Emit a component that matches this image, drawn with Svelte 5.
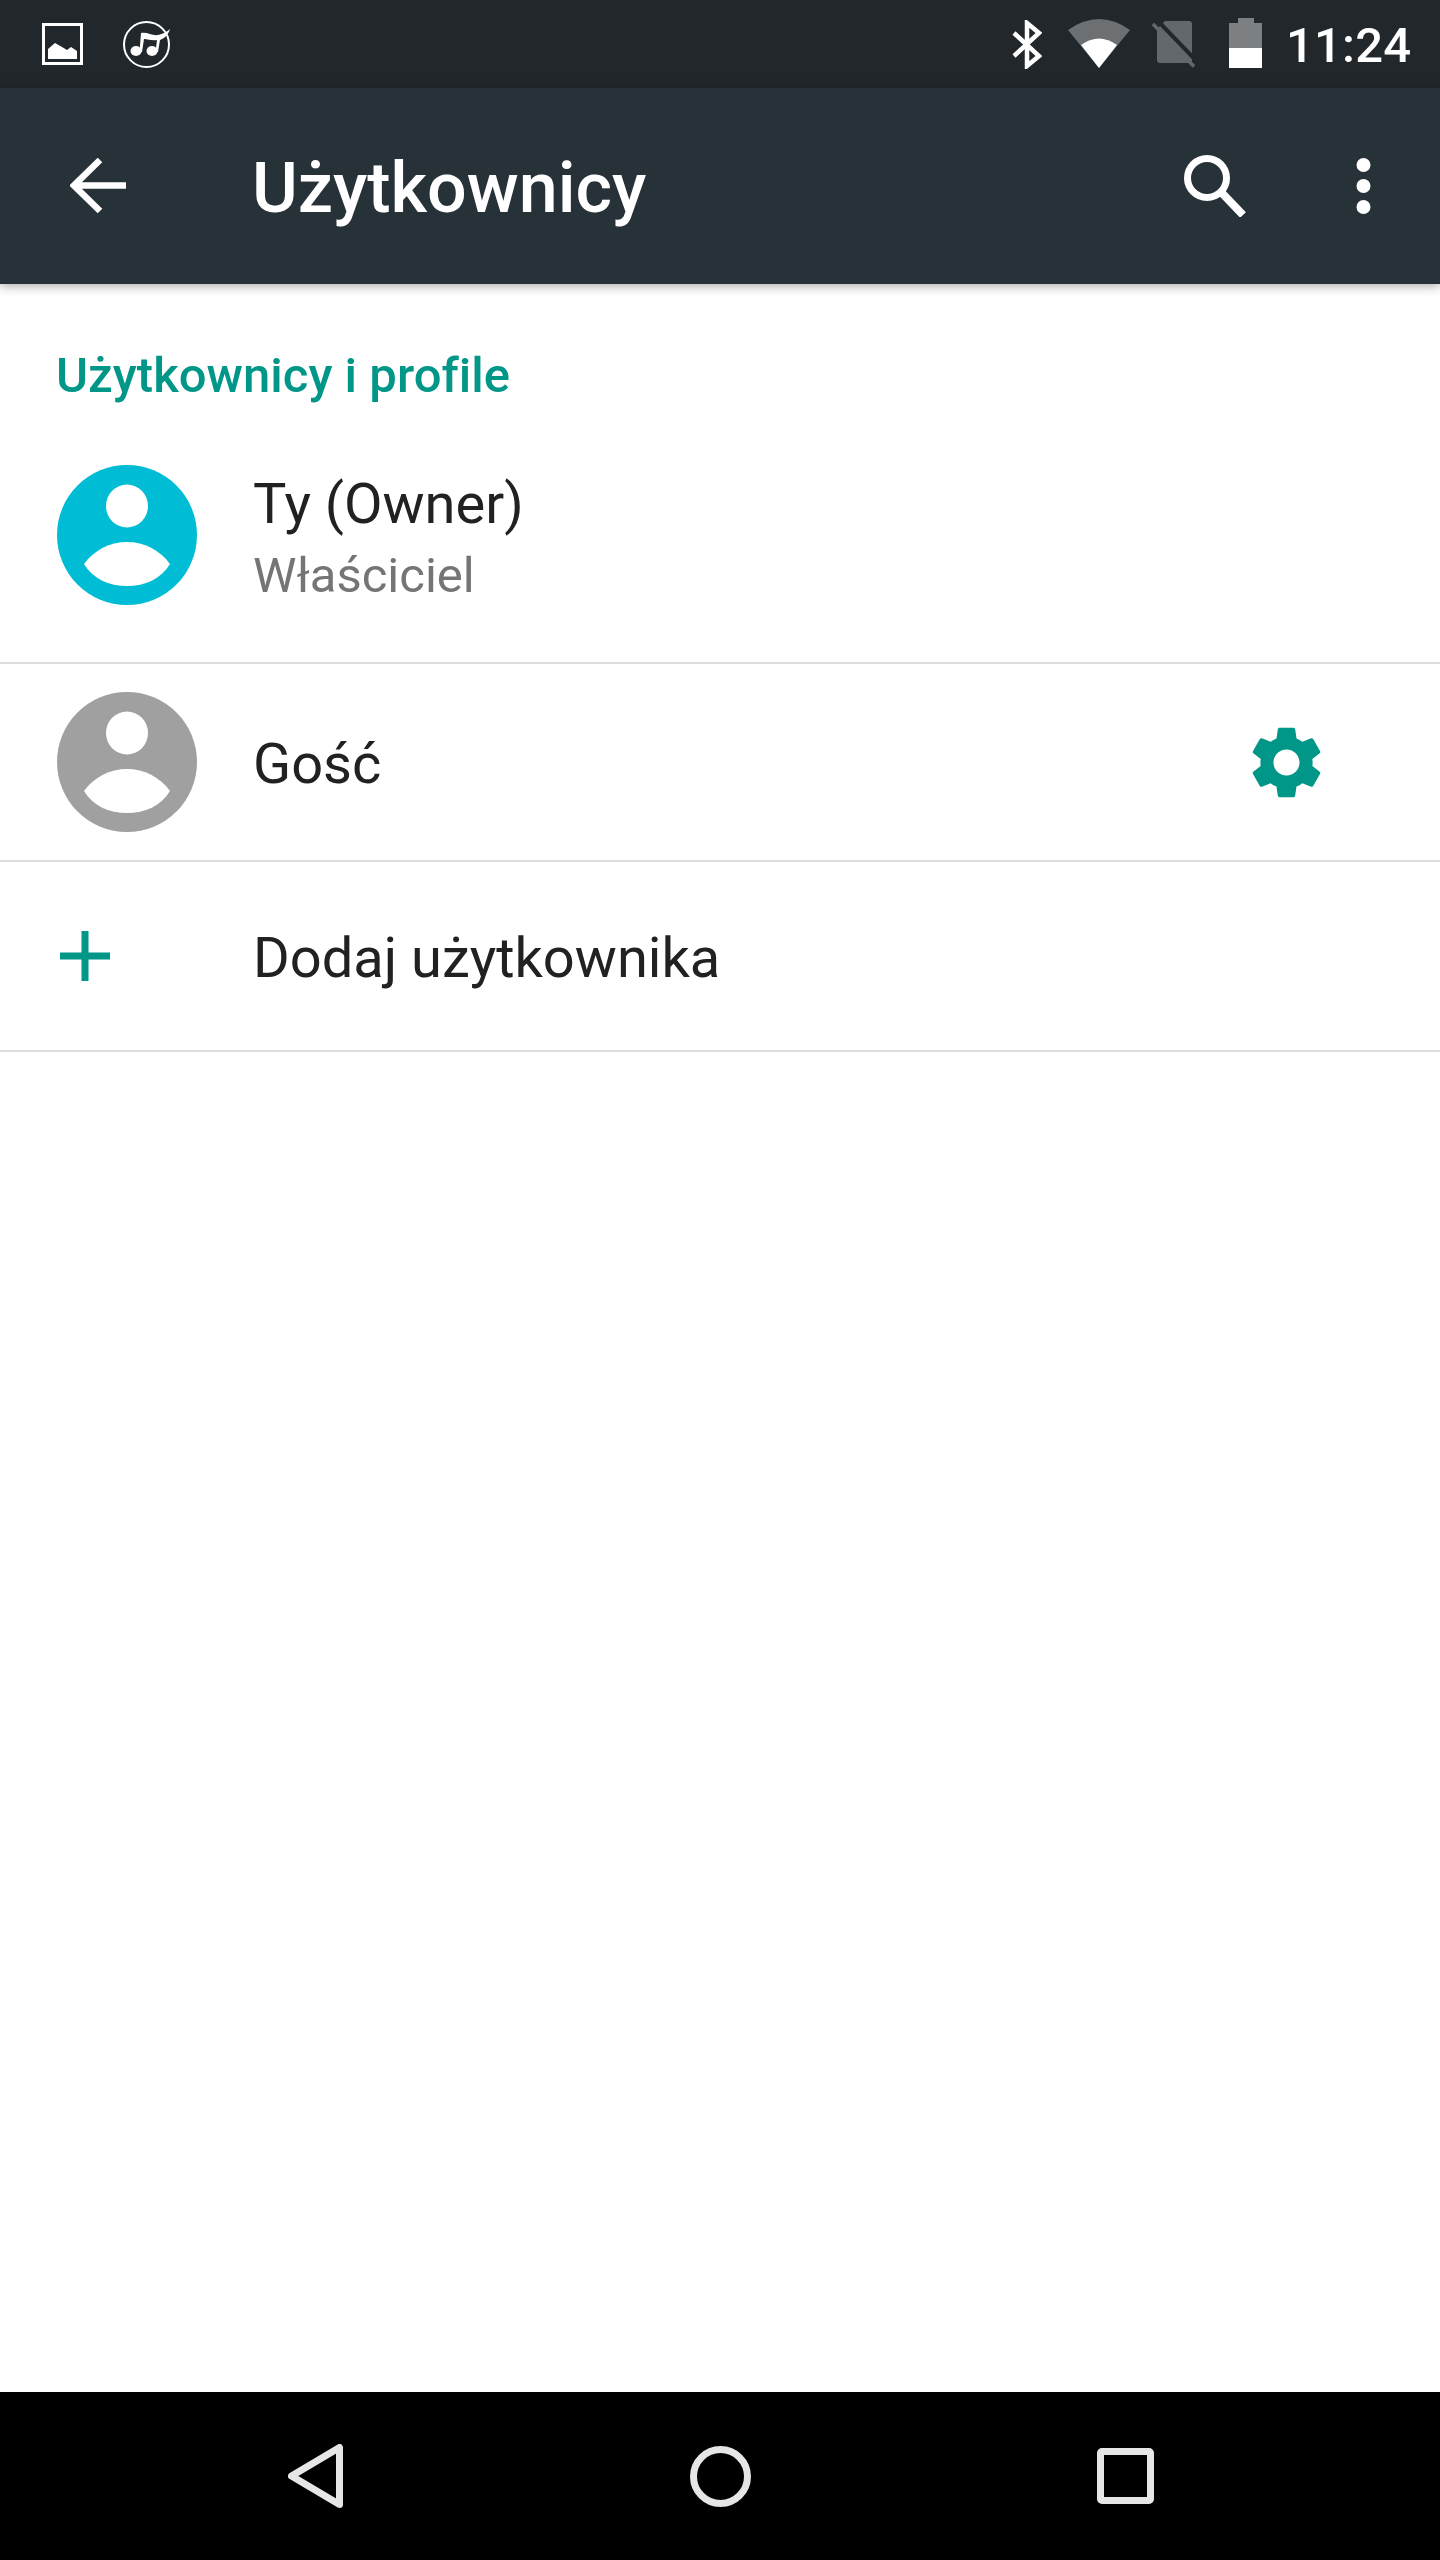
<script>
  const gear = "M19.14 12.94c.04-.3.06-.61.06-.94 0-.32-.02-.64-.07-.94l2.03-1.58c.18-.14.23-.41.12-.61l-1.92-3.32c-.12-.22-.37-.29-.59-.22l-2.39.96c-.5-.38-1.03-.7-1.62-.94l-.36-2.54c-.04-.24-.24-.41-.48-.41h-3.84c-.24 0-.43.17-.47.41l-.36 2.54c-.59.24-1.13.57-1.62.94l-2.39-.96c-.22-.08-.47 0-.59.22L2.74 8.87c-.12.21-.08.47.12.61l2.03 1.58c-.05.3-.09.63-.09.94s.02.64.07.94l-2.03 1.58c-.18.14-.23.41-.12.61l1.92 3.32c.12.22.37.29.59.22l2.39-.96c.5.38 1.03.7 1.62.94l.36 2.54c.05.24.24.41.48.41h3.84c.24 0 .44-.17.47-.41l.36-2.54c.59-.24 1.13-.56 1.62-.94l2.39.96c.22.08.47 0 .59-.22l1.92-3.32c.12-.22.07-.47-.12-.61l-2.01-1.58zM12 15.6c-1.98 0-3.6-1.62-3.6-3.6s1.62-3.6 3.6-3.6 3.6 1.62 3.6 3.6-1.62 3.6-3.6 3.6z";
</script>

{#snippet avatar(cls)}
  <svg class="avatar {cls}" width="140" height="140" viewBox="0 0 140 140">
    <circle class="disc" cx="70" cy="70" r="70" />
    <ellipse cx="70" cy="41" rx="21" ry="21.5" fill="#fff" />
    <path d="M27 99 C37 85 53 77 70 77 C87 77 103 85 113 99 C104 114 88 121 70 121 C52 121 36 114 27 99 Z" fill="#fff" />
  </svg>
{/snippet}

<div class="screen">
  <header class="status">
    <svg class="s-image" width="41" height="42" viewBox="0 0 41 42">
      <rect x="1.5" y="1.5" width="38" height="39" fill="none" stroke="#fff" stroke-width="3" />
      <path d="M6 36 V26 L13 20 L20 24 L25 27 L29 24 L35 28 V36 Z" fill="#fff" />
    </svg>
    <svg class="s-music" width="49" height="47" viewBox="0 0 49 47">
      <circle cx="24.5" cy="23.5" r="22.5" fill="none" stroke="#fff" stroke-width="2" />
      <ellipse cx="14" cy="30" rx="5.5" ry="5" fill="#fff" />
      <ellipse cx="30" cy="30" rx="5.5" ry="5" fill="#fff" />
      <path d="M17.5 31 L19 12 C26 11 30 15 36 14 C41 13 45 11 48 8 C46 15 41 18 38 19 L36 31 H33.5 L35 19 C30 20 26 18 22 18 L20 31 Z" fill="#fff" />
    </svg>
    <svg class="s-bt" width="30" height="49" viewBox="0 0 30 49">
      <path d="M2 13 L27 36 L15 46 V3 L27 13 L2 36" fill="none" stroke="#fff" stroke-width="4.5" />
    </svg>
    <svg class="s-wifi" width="62" height="49" viewBox="0 0 62 49">
      <path d="M0 11 Q31 -11 62 11 L31 49 Z" fill="#6c7073" />
      <path d="M13 26 Q31 13 49 26 L31 49 Z" fill="#fff" />
    </svg>
    <svg class="s-sim" width="45" height="49" viewBox="0 0 45 49">
      <path d="M13 1 H37 Q40 1 40 4 V40 Q40 43 37 43 H8 Q5 43 5 40 V9 Z" fill="#63686c" />
      <path d="M6 1 L46 42.5" stroke="#21272b" stroke-width="4" />
      <path d="M1 4 L42 46.5" stroke="#63686c" stroke-width="3.5" />
    </svg>
    <svg class="s-batt" width="33" height="50" viewBox="0 0 33 50">
      <path d="M9 0 H25 V5 H33 V30 H0 V5 H9 Z" fill="#7c8083" />
      <rect y="30" width="33" height="20" fill="#fff" />
    </svg>
    <span class="time">11:24</span>
  </header>

  <div class="toolbar">
    <svg class="t-back" width="56" height="56" viewBox="0 0 56 56">
      <path d="M56 27.5 H5 M30 2 L4 27.5 L30 53" fill="none" stroke="#fff" stroke-width="6.5" />
    </svg>
    <h1>Użytkownicy</h1>
    <svg class="t-search" width="62" height="62" viewBox="0 0 62 62">
      <circle cx="23" cy="23" r="19.5" fill="none" stroke="#fff" stroke-width="7" />
      <path d="M37 37 L59 60" stroke="#fff" stroke-width="8" />
    </svg>
    <svg class="t-more" width="15" height="56" viewBox="0 0 15 56">
      <circle cx="7.5" cy="7" r="7" fill="#fff" />
      <circle cx="7.5" cy="28" r="7" fill="#fff" />
      <circle cx="7.5" cy="49" r="7" fill="#fff" />
    </svg>
  </div>

  <main class="content">
    <h2>Użytkownicy i profile</h2>

    <div class="row owner">
      {@render avatar("cyan")}
      <div class="labels">
        <div class="primary">Ty (Owner)</div>
        <div class="secondary">Właściciel</div>
      </div>
    </div>

    <div class="row guest">
      {@render avatar("grey")}
      <div class="labels"><div class="primary">Gość</div></div>
      <svg class="gear" width="87" height="87" viewBox="0 0 24 24"><path d={gear} fill="#009688" /></svg>
    </div>

    <div class="row add">
      <svg class="plus" width="50" height="50" viewBox="0 0 50 50">
        <path d="M25 0 V50 M0 25 H50" stroke="#009688" stroke-width="7" />
      </svg>
      <div class="labels"><div class="primary">Dodaj użytkownika</div></div>
    </div>
  </main>

  <nav class="navbar">
    <svg width="55" height="64" viewBox="0 0 55 64">
      <path d="M51.5 3.5 V60.5 L3.5 32 Z" fill="none" stroke="#e6e6e6" stroke-width="7" stroke-linejoin="round" />
    </svg>
    <svg width="61" height="61" viewBox="0 0 61 61">
      <circle cx="30.5" cy="30.5" r="27" fill="none" stroke="#e6e6e6" stroke-width="7" />
    </svg>
    <svg width="57" height="56" viewBox="0 0 57 56">
      <rect x="3.5" y="3.5" width="50" height="49" rx="1.5" fill="none" stroke="#e6e6e6" stroke-width="7" />
    </svg>
  </nav>
</div>

<style>
  :global(body) { margin: 0; background: #fff; }
  .screen {
    width: 1440px;
    height: 2560px;
    display: flex;
    flex-direction: column;
    font-family: Roboto, "Liberation Sans", sans-serif;
    background: #fff;
    overflow: hidden;
  }
  svg { display: block; flex: none; }

  .status {
    height: 88px;
    background: #21272b;
    display: flex;
    align-items: flex-start;
    flex: none;
  }
  .s-image { margin: 23px 0 0 42px; }
  .s-music { margin: 21px 0 0 39px; }
  .s-bt { margin: 20px 0 0 841px; }
  .s-wifi { margin: 19px 0 0 26px; }
  .s-sim { margin: 20px 0 0 22px; }
  .s-batt { margin: 18px 0 0 32px; }
  .time {
    margin: 18px 0 0 24px;
    color: #fff;
    font-size: 49px;
    font-weight: 500;
    letter-spacing: 0.2px;
    line-height: 56px;
  }

  .toolbar {
    height: 196px;
    background: #273238;
    display: flex;
    align-items: center;
    flex: none;
    position: relative;
    box-shadow: 0 2px 10px rgba(0, 0, 0, 0.35);
    z-index: 1;
  }
  .t-back { margin-left: 70px; }
  h1 {
    margin: 0 0 0 126px;
    padding-top: 4px;
    color: #fff;
    font-size: 70px;
    font-weight: 500;
    line-height: 82px;
    flex: 1;
  }
  .t-search { margin-right: 110px; }
  .t-more { margin-right: 69px; }

  .content { flex: 1; }
  h2 {
    margin: 0;
    height: 123px;
    box-sizing: border-box;
    padding: 63px 0 0 56px;
    color: #009688;
    font-size: 49px;
    font-weight: 500;
    letter-spacing: 0.03px;
    line-height: 58px;
  }
  .row {
    display: flex;
    align-items: center;
    padding-left: 57px;
    box-sizing: border-box;
    border-bottom: 2px solid #dedede;
  }
  .owner { height: 257px; }
  .guest { height: 198px; }
  .add { height: 190px; }
  .labels { margin-left: 56px; flex: 1; }
  .owner .labels { padding-top: 7px; }
  .guest .labels { padding-top: 3px; }
  .primary {
    color: #212121;
    font-size: 56px;
    line-height: 66px;
  }
  .secondary {
    color: #757575;
    font-size: 49px;
    line-height: 58px;
    margin-top: 10px;
  }
  .disc { fill: #a0a0a0; }
  .cyan .disc { fill: #00bcd4; }
  .gear { margin-right: 110px; }
  .plus { margin-left: 3px; }
  .add .labels { margin-left: 143px; padding-top: 4px; }

  .navbar {
    height: 168px;
    background: #000;
    flex: none;
    display: flex;
    align-items: center;
    padding: 0 286px 0 288px;
    justify-content: space-between;
  }
</style>
